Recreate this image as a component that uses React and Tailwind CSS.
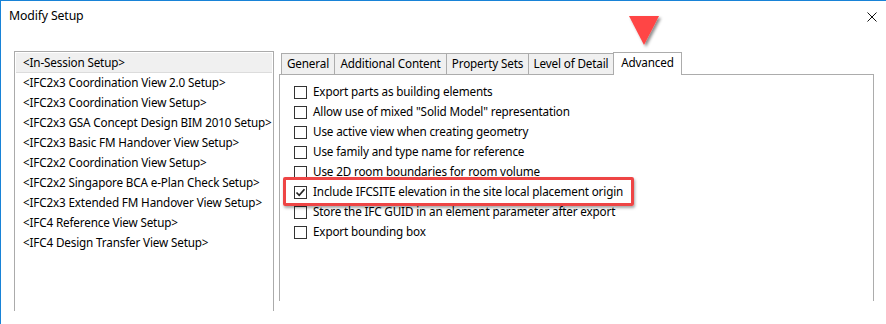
import React from "react";

const setups = [
  "<In-Session Setup>",
  "<IFC2x3 Coordination View 2.0 Setup>",
  "<IFC2x3 Coordination View Setup>",
  "<IFC2x3 GSA Concept Design BIM 2010 Setup>",
  "<IFC2x3 Basic FM Handover View Setup>",
  "<IFC2x2 Coordination View Setup>",
  "<IFC2x2 Singapore BCA e-Plan Check Setup>",
  "<IFC2x3 Extended FM Handover View Setup>",
  "<IFC4 Reference View Setup>",
  "<IFC4 Design Transfer View Setup>",
];

const options = [
  ["Export parts as building elements", false],
  ['Allow use of mixed "Solid Model" representation', false],
  ["Use active view when creating geometry", false],
  ["Use family and type name for reference", false],
  ["Use 2D room boundaries for room volume", false],
  ["Include IFCSITE elevation in the site local placement origin", true],
  ["Store the IFC GUID in an element parameter after export", false],
  ["Export bounding box", false],
];

const tabs = [
  ["General", "w-[54px]"],
  ["Additional Content", "w-[113px]"],
  ["Property Sets", "w-[83px]"],
  ["Level of Detail", "w-[86px]"],
];

function Checkbox({ checked }) {
  return (
    <div className="w-[13px] h-[13px] border border-[#333333] bg-white flex items-center justify-center shrink-0">
      {checked && (
        <svg width="11" height="11" viewBox="0 0 11 11">
          <path d="M1.5 5.5 L4.2 8.3 L9.5 2.2" fill="none" stroke="#222" strokeWidth="1.7" />
        </svg>
      )}
    </div>
  );
}

export default function App() {
  return (
    <div
      className="relative w-[886px] h-[324px] bg-white border-t border-l border-[#1883d7] text-[11.7px] tracking-[-0.15px] text-black overflow-hidden"
      style={{ fontFamily: '"Segoe UI", "Noto Sans", sans-serif' }}
    >
      <div className="h-[31px] flex items-center justify-between pl-[8px] pr-[9px]">
        <span className="text-[12.3px]">Modify Setup</span>
        <svg width="10" height="10" viewBox="0 0 10 10">
          <path d="M0.5 0.5 L9.5 9.5 M9.5 0.5 L0.5 9.5" stroke="#111" strokeWidth="1" />
        </svg>
      </div>
      <div className="flex pt-[19px] pl-[13px]">
        <div className="w-[260px] h-[260px] border border-b-0 border-[#ababab] pt-px px-px">
          {setups.map((s, i) => (
            <div
              key={s}
              className={
                "h-[20px] flex items-center pl-[7px] whitespace-nowrap " +
                (i === 0 ? "bg-[#f0f0f0] border-b border-[#dcdcdc]" : "")
              }
            >
              {s}
            </div>
          ))}
        </div>
        <div className="ml-[5px] w-[595px] flex flex-col">
          <div className="flex items-end h-[23px] pl-[2px]">
            {tabs.map(([t, w]) => (
              <div
                key={t}
                className={
                  "h-[21px] border border-b-0 border-[#acacac] bg-[#f0f0f0] flex items-center justify-center whitespace-nowrap -mr-px " +
                  w
                }
              >
                {t}
              </div>
            ))}
            <div className="relative w-[69px] h-[23px] border border-b-0 border-[#acacac] bg-white flex items-center justify-center whitespace-nowrap -mb-px z-10 pb-[2px]">
              Advanced
            </div>
          </div>
          <div className="h-[227px] border border-b-0 border-[#acacac] pt-[7px] pl-[14px] flex flex-col">
            {options.map(([label, checked]) => (
              <div key={label} className="h-[20px] flex items-center gap-[6px] whitespace-nowrap">
                <Checkbox checked={checked} />
                <span>{label}</span>
              </div>
            ))}
          </div>
        </div>
      </div>

      <div className="absolute left-[282px] top-[176px] w-[351px] h-[29px] border-[3px] border-[#ee4545] rounded-[2px] shadow-[1px_2px_3px_rgba(0,0,0,0.35)]" />

      <svg className="absolute left-[627px] top-[14px]" width="36" height="36" viewBox="0 0 36 36">
        <defs>
          <filter id="sh" x="-30%" y="-30%" width="160%" height="160%">
            <feDropShadow dx="2" dy="2" stdDeviation="1.6" floodColor="#000" floodOpacity="0.45" />
          </filter>
        </defs>
        <polygon points="1,1 31,1 16,30" fill="#ff4545" filter="url(#sh)" />
      </svg>
    </div>
  );
}
